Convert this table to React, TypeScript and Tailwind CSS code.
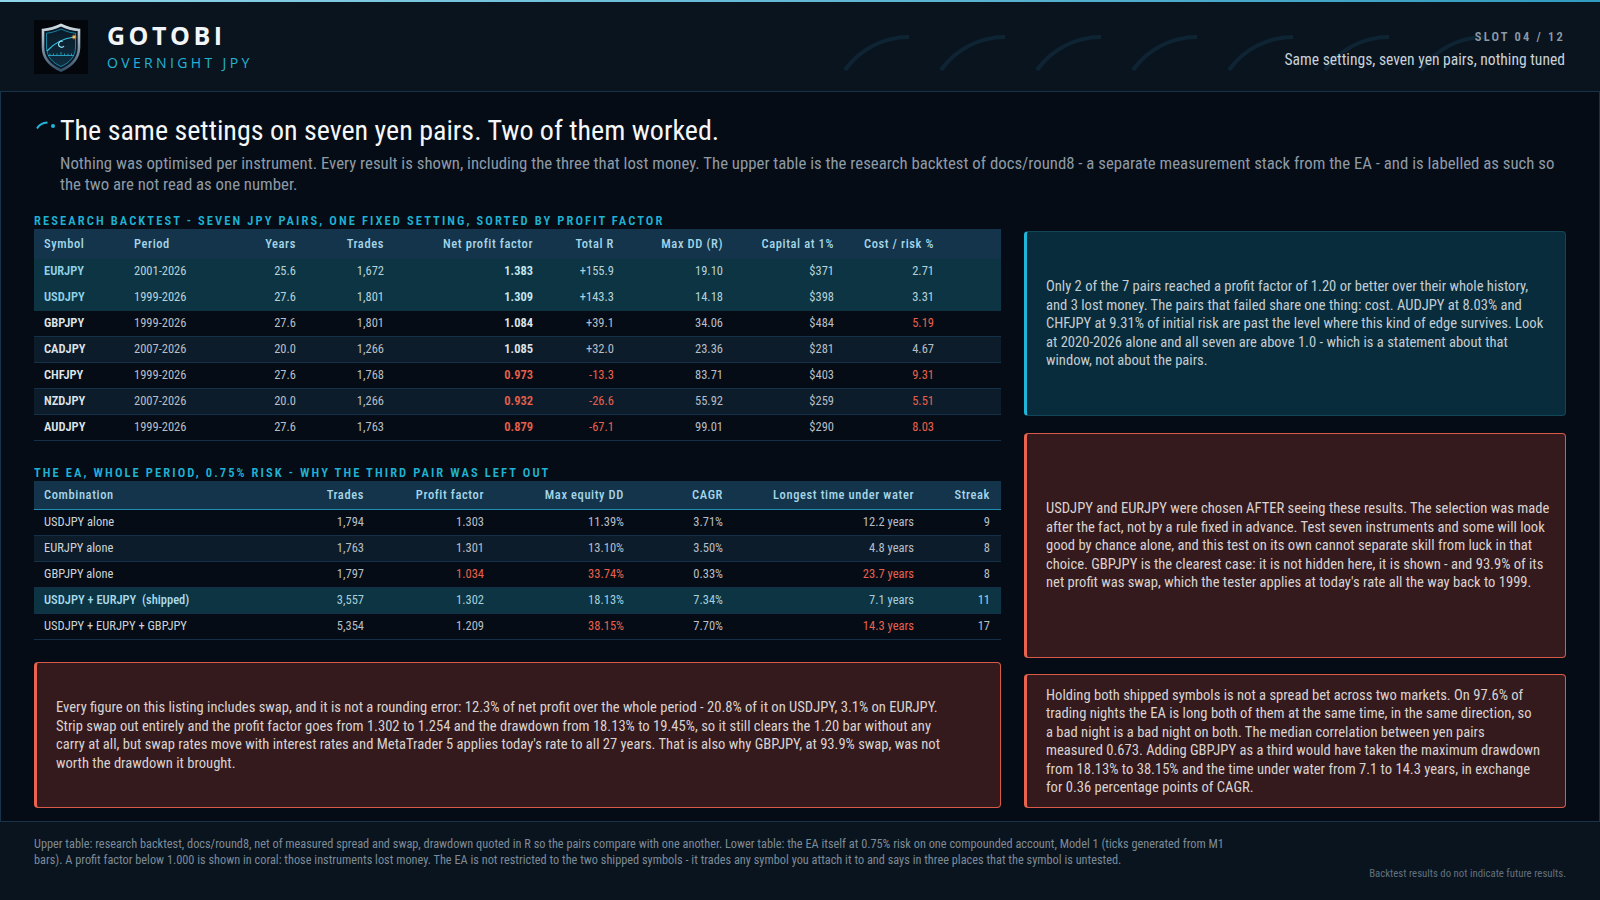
import React from "react";

type Cell = { v: string; red?: boolean };
interface Row { cells: Cell[]; tone: "hl" | "dark" | "alt" }

const c = (v: string, red = false): Cell => ({ v, red });

const research: Row[] = [
  { tone: "hl", cells: [c("EURJPY"), c("2001-2026"), c("25.6"), c("1,672"), c("1.383"), c("+155.9"), c("19.10"), c("$371"), c("2.71")] },
  { tone: "hl", cells: [c("USDJPY"), c("1999-2026"), c("27.6"), c("1,801"), c("1.309"), c("+143.3"), c("14.18"), c("$398"), c("3.31")] },
  { tone: "dark", cells: [c("GBPJPY"), c("1999-2026"), c("27.6"), c("1,801"), c("1.084"), c("+39.1"), c("34.06"), c("$484"), c("5.19", true)] },
  { tone: "alt", cells: [c("CADJPY"), c("2007-2026"), c("20.0"), c("1,266"), c("1.085"), c("+32.0"), c("23.36"), c("$281"), c("4.67")] },
  { tone: "dark", cells: [c("CHFJPY"), c("1999-2026"), c("27.6"), c("1,768"), c("0.973", true), c("-13.3", true), c("83.71"), c("$403"), c("9.31", true)] },
  { tone: "alt", cells: [c("NZDJPY"), c("2007-2026"), c("20.0"), c("1,266"), c("0.932", true), c("-26.6", true), c("55.92"), c("$259"), c("5.51", true)] },
  { tone: "dark", cells: [c("AUDJPY"), c("1999-2026"), c("27.6"), c("1,763"), c("0.879", true), c("-67.1", true), c("99.01"), c("$290"), c("8.03", true)] },
];

const ea: Row[] = [
  { tone: "dark", cells: [c("USDJPY alone"), c("1,794"), c("1.303"), c("11.39%"), c("3.71%"), c("12.2 years"), c("9")] },
  { tone: "alt", cells: [c("EURJPY alone"), c("1,763"), c("1.301"), c("13.10%"), c("3.50%"), c("4.8 years"), c("8")] },
  { tone: "dark", cells: [c("GBPJPY alone"), c("1,797"), c("1.034", true), c("33.74%", true), c("0.33%"), c("23.7 years", true), c("8")] },
  { tone: "hl", cells: [c("USDJPY + EURJPY  (shipped)"), c("3,557"), c("1.302"), c("18.13%"), c("7.34%"), c("7.1 years"), c("11")] },
  { tone: "dark", cells: [c("USDJPY + EURJPY + GBPJPY"), c("5,354"), c("1.209"), c("38.15%", true), c("7.70%"), c("14.3 years", true), c("17")] },
];

const toneBg = { hl: "bg-[#0d3442]", dark: "bg-[#050c15]", alt: "bg-[#0d1c2a]" };

function Logo() {
  return (
    <svg width="54" height="54" viewBox="0 0 54 54" className="shrink-0">
      <defs>
        <linearGradient id="rim" x1="0" y1="0" x2="0" y2="1">
          <stop offset="0" stopColor="#d3dee6" />
          <stop offset="1" stopColor="#35506a" />
        </linearGradient>
        <linearGradient id="inner" x1="0" y1="0" x2="0" y2="1">
          <stop offset="0" stopColor="#0a1a29" />
          <stop offset="1" stopColor="#0f2e40" />
        </linearGradient>
        <radialGradient id="glow" cx="0.5" cy="0.5" r="0.5">
          <stop offset="0" stopColor="#ffb347" />
          <stop offset="1" stopColor="#ffb347" stopOpacity="0" />
        </radialGradient>
      </defs>
      <rect width="54" height="54" fill="#03070b" />
      <path d="M27 5 C33 8 39 9.5 45 10 V27 C45 38.5 37.5 46 27 50.5 C16.5 46 9 38.5 9 27 V10 C15 9.5 21 8 27 5 Z" fill="#0a1826" stroke="url(#rim)" strokeWidth="2.6" />
      <path d="M27 9 C32 11.5 37 12.8 41.5 13.2 V27 C41.5 36.5 35.5 42.8 27 46.5 C18.5 42.8 12.5 36.5 12.5 27 V13.2 C17 12.8 22 11.5 27 9 Z" fill="url(#inner)" stroke="#1b9fc2" strokeWidth="0.8" />
      <path d="M13 31 C20 23 30 18.5 40 17" stroke="#37c0e0" strokeWidth="1.2" fill="none" />
      <circle cx="40" cy="17" r="3" fill="url(#glow)" />
      <circle cx="40" cy="17" r="1.2" fill="#ffc060" />
      <path d="M28.6 21.4 A3 3 0 1 0 30 26" stroke="#8fe3f5" strokeWidth="1.1" fill="none" />
      <path d="M14 35.5 H40" stroke="#2aa8c8" strokeWidth="0.9" />
      {[16, 19.5, 23, 27, 30.5, 34, 37.5].map((x, i) => (
        <path key={x} d={`M${x} ${i === 3 ? 32 : 33.5} V35.5`} stroke="#2aa8c8" strokeWidth="0.8" />
      ))}
    </svg>
  );
}

function Arc() {
  return (
    <svg width="72" height="40" viewBox="0 0 72 40" className="shrink-0">
      <path d="M4 37 A78.6 78.6 0 0 1 68 4" stroke="#0e2433" strokeWidth="4" fill="none" />
    </svg>
  );
}

function CoralCard({ children, className = "" }: { children: React.ReactNode; className?: string }) {
  return (
    <div className={`flex items-center rounded-[4px] border border-[#d85a48] border-l-[3px] border-l-[#e8644e] bg-[#351a1d] pl-[19px] text-[14.6px] leading-[18.5px] text-[#d9d2d1] ${className}`}>
      <p>{children}</p>
    </div>
  );
}

export default function App() {
  const r1Cols = "grid grid-cols-[90px_76px_106px_88px_149px_81px_109px_111px_100px_57px]";
  const r2Cols = "grid grid-cols-[240px_100px_120px_140px_99px_191px_77px]";
  const label = "text-[12.5px] font-semibold leading-[17px] tracking-[2.1px] text-[#1fb2d4]";
  const head = "items-center bg-[#13344a] text-[12.5px] font-medium tracking-[0.6px] text-[#a6d6e8]";

  return (
    <div className="flex h-[900px] w-full flex-col overflow-hidden bg-[#0a141f] font-['Roboto_Condensed','Open_Sans',sans-serif] text-[#c3ccd2]">
      <div className="h-[2px] bg-gradient-to-r from-[#8fd6ea] to-[#2f9cc0]" />

      {/* header */}
      <header className="relative flex h-[89px] items-start justify-between pl-[34px] pr-[35px]">
        <div className="absolute left-[841px] top-[31px] flex gap-[24px]">
          {Array.from({ length: 7 }).map((_, i) => <Arc key={i} />)}
        </div>
        <div className="relative mt-[18px] flex items-start gap-[19px]">
          <Logo />
          <div className="flex flex-col font-['Open_Sans',sans-serif]">
            <span className="text-[25px] font-bold leading-[30px] tracking-[0.14em] text-[#f2f5f7]">GOTOBI</span>
            <span className="mt-[4px] text-[14px] font-medium leading-[18px] tracking-[0.24em] text-[#22b4d6]">OVERNIGHT JPY</span>
          </div>
        </div>
        <div className="relative mt-[27px] flex flex-col items-end">
          <span className="text-[12.5px] font-semibold leading-[16px] tracking-[2.2px] text-[#8d9aa6]">SLOT 04 / 12</span>
          <span className="mt-[5px] text-[15.6px] leading-[20px] text-[#c8d2d9]">Same settings, seven yen pairs, nothing tuned</span>
        </div>
      </header>

      {/* main */}
      <main className="flex h-[731px] flex-col border border-[#183349] bg-[#050c15] px-[33px] pb-[13px] pt-[23px]">
        <div className="flex items-start">
          <div className="w-[26px] shrink-0 pl-[2px] pt-[6px]">
            <svg width="20" height="9" viewBox="0 0 20 9">
              <path d="M1 7.5 Q4 2 11.5 1.5" stroke="#22b5d8" strokeWidth="2" fill="none" />
              <circle cx="17" cy="5" r="2" fill="#22b5d8" />
            </svg>
          </div>
          <h1 className="text-[28px] font-normal leading-[32px] text-[#f4f6f8]">The same settings on seven yen pairs. Two of them worked.</h1>
        </div>
        <p className="mt-[6px] pl-[26px] text-[16.8px] leading-[21px] text-[#8e9aa6]">
          Nothing was optimised per instrument. Every result is shown, including the three that lost money. The upper table is the research backtest of docs/round8 - a separate measurement stack from the EA - and is labelled as such so the two are not read as one number.
        </p>

        <div className="mt-[17px] grid flex-1 grid-cols-[967px_542px] gap-x-[23px]">
          {/* left column */}
          <div className="flex flex-col">
            <h2 className={label}>RESEARCH BACKTEST - SEVEN JPY PAIRS, ONE FIXED SETTING, SORTED BY PROFIT FACTOR</h2>
            <div className="whitespace-nowrap text-[12.5px]">
              <div className={`${r1Cols} ${head} h-[30px]`}>
                <span className="px-[10px]">Symbol</span>
                <span className="px-[10px]">Period</span>
                <span className="px-[10px] text-right">Years</span>
                <span className="px-[10px] text-right">Trades</span>
                <span className="px-[10px] text-right">Net profit factor</span>
                <span className="px-[10px] text-right">Total R</span>
                <span className="px-[10px] text-right">Max DD (R)</span>
                <span className="px-[10px] text-right">Capital at 1%</span>
                <span className="px-[10px] text-right">Cost / risk %</span>
                <span />
              </div>
              {research.map((row) => {
                const hl = row.tone === "hl";
                return (
                  <div key={row.cells[0].v} className={`${r1Cols} h-[26px] items-center border-b ${hl ? "border-[#0d3442]" : "border-[#15314a]"} ${toneBg[row.tone]}`}>
                    {row.cells.map((cell, i) => (
                      <span
                        key={i}
                        className={`px-[10px] ${i > 1 ? "text-right" : ""} ${i === 0 || i === 4 ? "font-semibold" : ""} ${
                          cell.red ? "text-[#e8604b]" : i === 0 ? (hl ? "text-[#8fd2e8]" : "text-[#dfe5ea]") : i === 4 ? (hl ? "text-[#cbe9f3]" : "text-[#e2e7eb]") : hl ? "text-[#b4d2dc]" : "text-[#b6bfc7]"
                        }`}
                      >
                        {cell.v}
                      </span>
                    ))}
                    <span />
                  </div>
                );
              })}
            </div>

            <h2 className={`mt-[23px] ${label}`}>THE EA, WHOLE PERIOD, 0.75% RISK - WHY THE THIRD PAIR WAS LEFT OUT</h2>
            <div className="whitespace-nowrap text-[12.5px]">
              <div className={`${r2Cols} ${head} h-[29px] border-b border-[#1d8db2]`}>
                <span className="px-[10px]">Combination</span>
                <span className="px-[10px] text-right">Trades</span>
                <span className="px-[10px] text-right">Profit factor</span>
                <span className="px-[10px] text-right">Max equity DD</span>
                <span className="px-[10px] text-right">CAGR</span>
                <span className="px-[10px] text-right">Longest time under water</span>
                <span className="pl-[10px] pr-[11px] text-right">Streak</span>
              </div>
              {ea.map((row) => {
                const hl = row.tone === "hl";
                return (
                  <div key={row.cells[0].v} className={`${r2Cols} h-[26px] items-center border-b border-[#15314a] ${toneBg[row.tone]}`}>
                    {row.cells.map((cell, i) => (
                      <span
                        key={i}
                        className={`${i === 6 ? "pl-[10px] pr-[11px]" : "px-[10px]"} ${i > 0 ? "text-right" : "whitespace-pre"} ${hl && i === 0 ? "font-medium" : ""} ${
                          cell.red ? "text-[#e8604b]" : hl ? (i === 0 ? "text-[#a9ddee]" : "text-[#a3cfdd]") : i === 0 ? "text-[#ccd3d9]" : "text-[#b6bfc7]"
                        }`}
                      >
                        {cell.v}
                      </span>
                    ))}
                  </div>
                );
              })}
            </div>

            <CoralCard className="mt-[22px] flex-1 pr-[40px]">
              Every figure on this listing includes swap, and it is not a rounding error: 12.3% of net profit over the whole period - 20.8% of it on USDJPY, 3.1% on EURJPY. Strip swap out entirely and the profit factor goes from 1.302 to 1.254 and the drawdown from 18.13% to 19.45%, so it still clears the 1.20 bar without any carry at all, but swap rates move with interest rates and MetaTrader 5 applies today's rate to all 27 years. That is also why GBPJPY, at 93.9% swap, was not worth the drawdown it brought.
            </CoralCard>
          </div>

          {/* right column */}
          <div className="mt-[19px] flex flex-col">
            <div className="flex h-[185px] items-center rounded-[4px] border border-[#124657] border-l-[3px] border-l-[#1fb6d8] bg-[#082c3b] pl-[19px] pr-[15px] text-[14.6px] leading-[18.5px] text-[#c3cdd3]">
              <p>
                Only 2 of the 7 pairs reached a profit factor of 1.20 or better over their whole history, and 3 lost money. The pairs that failed share one thing: cost. AUDJPY at 8.03% and CHFJPY at 9.31% of initial risk are past the level where this kind of edge survives. Look at 2020-2026 alone and all seven are above 1.0 - which is a statement about that window, not about the pairs.
              </p>
            </div>
            <CoralCard className="mt-[17px] h-[225px] pr-[15px]">
              USDJPY and EURJPY were chosen AFTER seeing these results. The selection was made after the fact, not by a rule fixed in advance. Test seven instruments and some will look good by chance alone, and this test on its own cannot separate skill from luck in that choice. GBPJPY is the clearest case: it is not hidden here, it is shown - and 93.9% of its net profit was swap, which the tester applies at today's rate all the way back to 1999.
            </CoralCard>
            <CoralCard className="mt-[16px] flex-1 pr-[24px]">
              Holding both shipped symbols is not a spread bet across two markets. On 97.6% of trading nights the EA is long both of them at the same time, in the same direction, so a bad night is a bad night on both. The median correlation between yen pairs measured 0.673. Adding GBPJPY as a third would have taken the maximum drawdown from 18.13% to 38.15% and the time under water from 7.1 to 14.3 years, in exchange for 0.36 percentage points of CAGR.
            </CoralCard>
          </div>
        </div>
      </main>

      {/* footer */}
      <footer className="flex h-[78px] justify-between pl-[34px] pr-[34px] pt-[14px]">
        <p className="max-w-[1200px] text-[12.3px] leading-[16px] text-[#7d8b97]">
          Upper table: research backtest, docs/round8, net of measured spread and swap, drawdown quoted in R so the pairs compare with one another. Lower table: the EA itself at 0.75% risk on one compounded account, Model 1 (ticks generated from M1 bars). A profit factor below 1.000 is shown in coral: those instruments lost money. The EA is not restricted to the two shipped symbols - it trades any symbol you attach it to and says in three places that the symbol is untested.
        </p>
        <span className="mb-[19px] self-end whitespace-nowrap text-[10.8px] leading-[14px] text-[#62717d]">Backtest results do not indicate future results.</span>
      </footer>
    </div>
  );
}
